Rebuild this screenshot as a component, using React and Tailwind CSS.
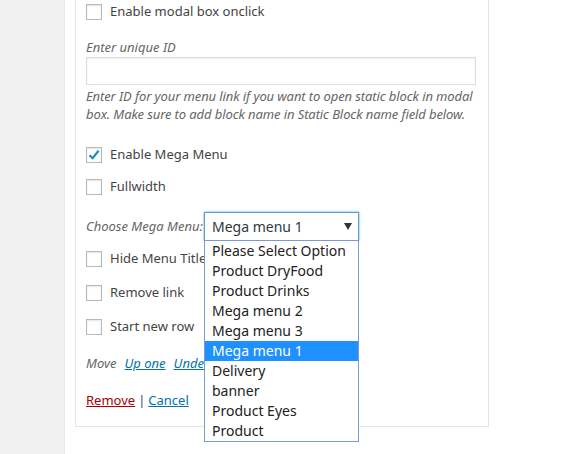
import { useState } from 'react';

const FONT = { fontFamily: '"Noto Sans", "Open Sans", sans-serif' };

const options = [
  'Please Select Option',
  'Product DryFood',
  'Product Drinks',
  'Mega menu 2',
  'Mega menu 3',
  'Mega menu 1',
  'Delivery',
  'banner',
  'Product Eyes',
  'Product',
];

function Checkbox({ checked, label }) {
  return (
    <label className="flex items-center h-4 text-[13px] text-[#444]">
      <span className="w-4 h-4 border border-[#b4b9be] bg-white shadow-[inset_0_1px_2px_rgba(0,0,0,0.1)] flex items-center justify-center">
        {checked && (
          <svg width="14" height="14" viewBox="0 0 14 14">
            <path d="M2.5 7.2 L5.6 10.2 L11.6 2.8" fill="none" stroke="#1e8cbe" strokeWidth="2.2" />
          </svg>
        )}
      </span>
      <span className="ml-[8px]">{label}</span>
    </label>
  );
}

export default function App() {
  const [selected] = useState('Mega menu 1');

  return (
    <div className="flex w-[561px] h-[454px] overflow-hidden bg-white" style={FONT}>
      <div className="w-[65px] shrink-0 bg-[#f1f1f1] border-r border-[#e8e8e8]" />
      <div className="pl-[10px]">
        <div className="relative w-[414px] h-[427px] border-x border-b border-[#e5e5e5] pl-[10px] pr-[11px]">
          <div className="pt-[4px]">
            <Checkbox label="Enable modal box onclick" />
          </div>

          <p className="mt-[18px] text-[13px] italic text-[#666] leading-[18px]">Enter unique ID</p>
          <div className="mt-[1px] w-[390px] h-[28px] border border-[#ddd] bg-white shadow-[inset_0_1px_2px_rgba(0,0,0,0.07)]" />
          <p className="mt-[2px] text-[13px] italic text-[#666] leading-[18px] w-[395px] tracking-[-0.1px]">
            Enter ID for your menu link if you want to open static block in modal box. Make sure to add block name in Static Block name field below.
          </p>

          <div className="mt-[24px]">
            <Checkbox checked label="Enable Mega Menu" />
          </div>
          <div className="mt-[16px]">
            <Checkbox label="Fullwidth" />
          </div>

          <div className="mt-[17px] flex items-center h-[29px]">
            <span className="text-[13px] italic text-[#666] w-[118px]">Choose Mega Menu:</span>
            <div className="relative w-[155px] h-[29px] border border-[#5b9dd9] shadow-[0_0_2px_rgba(30,140,190,0.8)] bg-white flex items-center pl-[7px] text-[14px] text-[#32373c]">
              {selected}
              <svg className="absolute right-[6px] top-[10px]" width="8" height="7" viewBox="0 0 8 7">
                <path d="M0 0 H8 L4 7 Z" fill="#333" />
              </svg>
              <ul className="absolute left-[-1px] top-[27px] w-[155px] border border-[#7a9ad6] bg-white z-10">
                {options.map((o) => (
                  <li
                    key={o}
                    className={`h-[20px] leading-[20px] pl-[7px] text-[14px] ${
                      o === selected ? 'bg-[#1e90ff] text-white' : 'text-[#222]'
                    }`}
                  >
                    {o}
                  </li>
                ))}
              </ul>
            </div>
          </div>

          <div className="mt-[10px]">
            <Checkbox label="Hide Menu Title" />
          </div>
          <div className="mt-[18px]">
            <Checkbox label="Remove link" />
          </div>
          <div className="mt-[18px]">
            <Checkbox label="Start new row" />
          </div>

          <div className="mt-[19px] w-[118px] overflow-hidden whitespace-nowrap text-[13px] leading-[18px] flex">
            <span className="italic text-[#666]">Move</span>
            <a className="ml-[8px] italic underline text-[#0073aa]">Up one</a>
            <a className="ml-[8px] italic underline text-[#0073aa]">Under</a>
          </div>

          <div className="mt-[19px] text-[13px] leading-[18px] text-[#444]">
            <a className="underline text-[#a00]">Remove</a>
            <span className="mx-[3px]">|</span>
            <a className="underline text-[#0073aa]">Cancel</a>
          </div>
        </div>
      </div>
    </div>
  );
}
